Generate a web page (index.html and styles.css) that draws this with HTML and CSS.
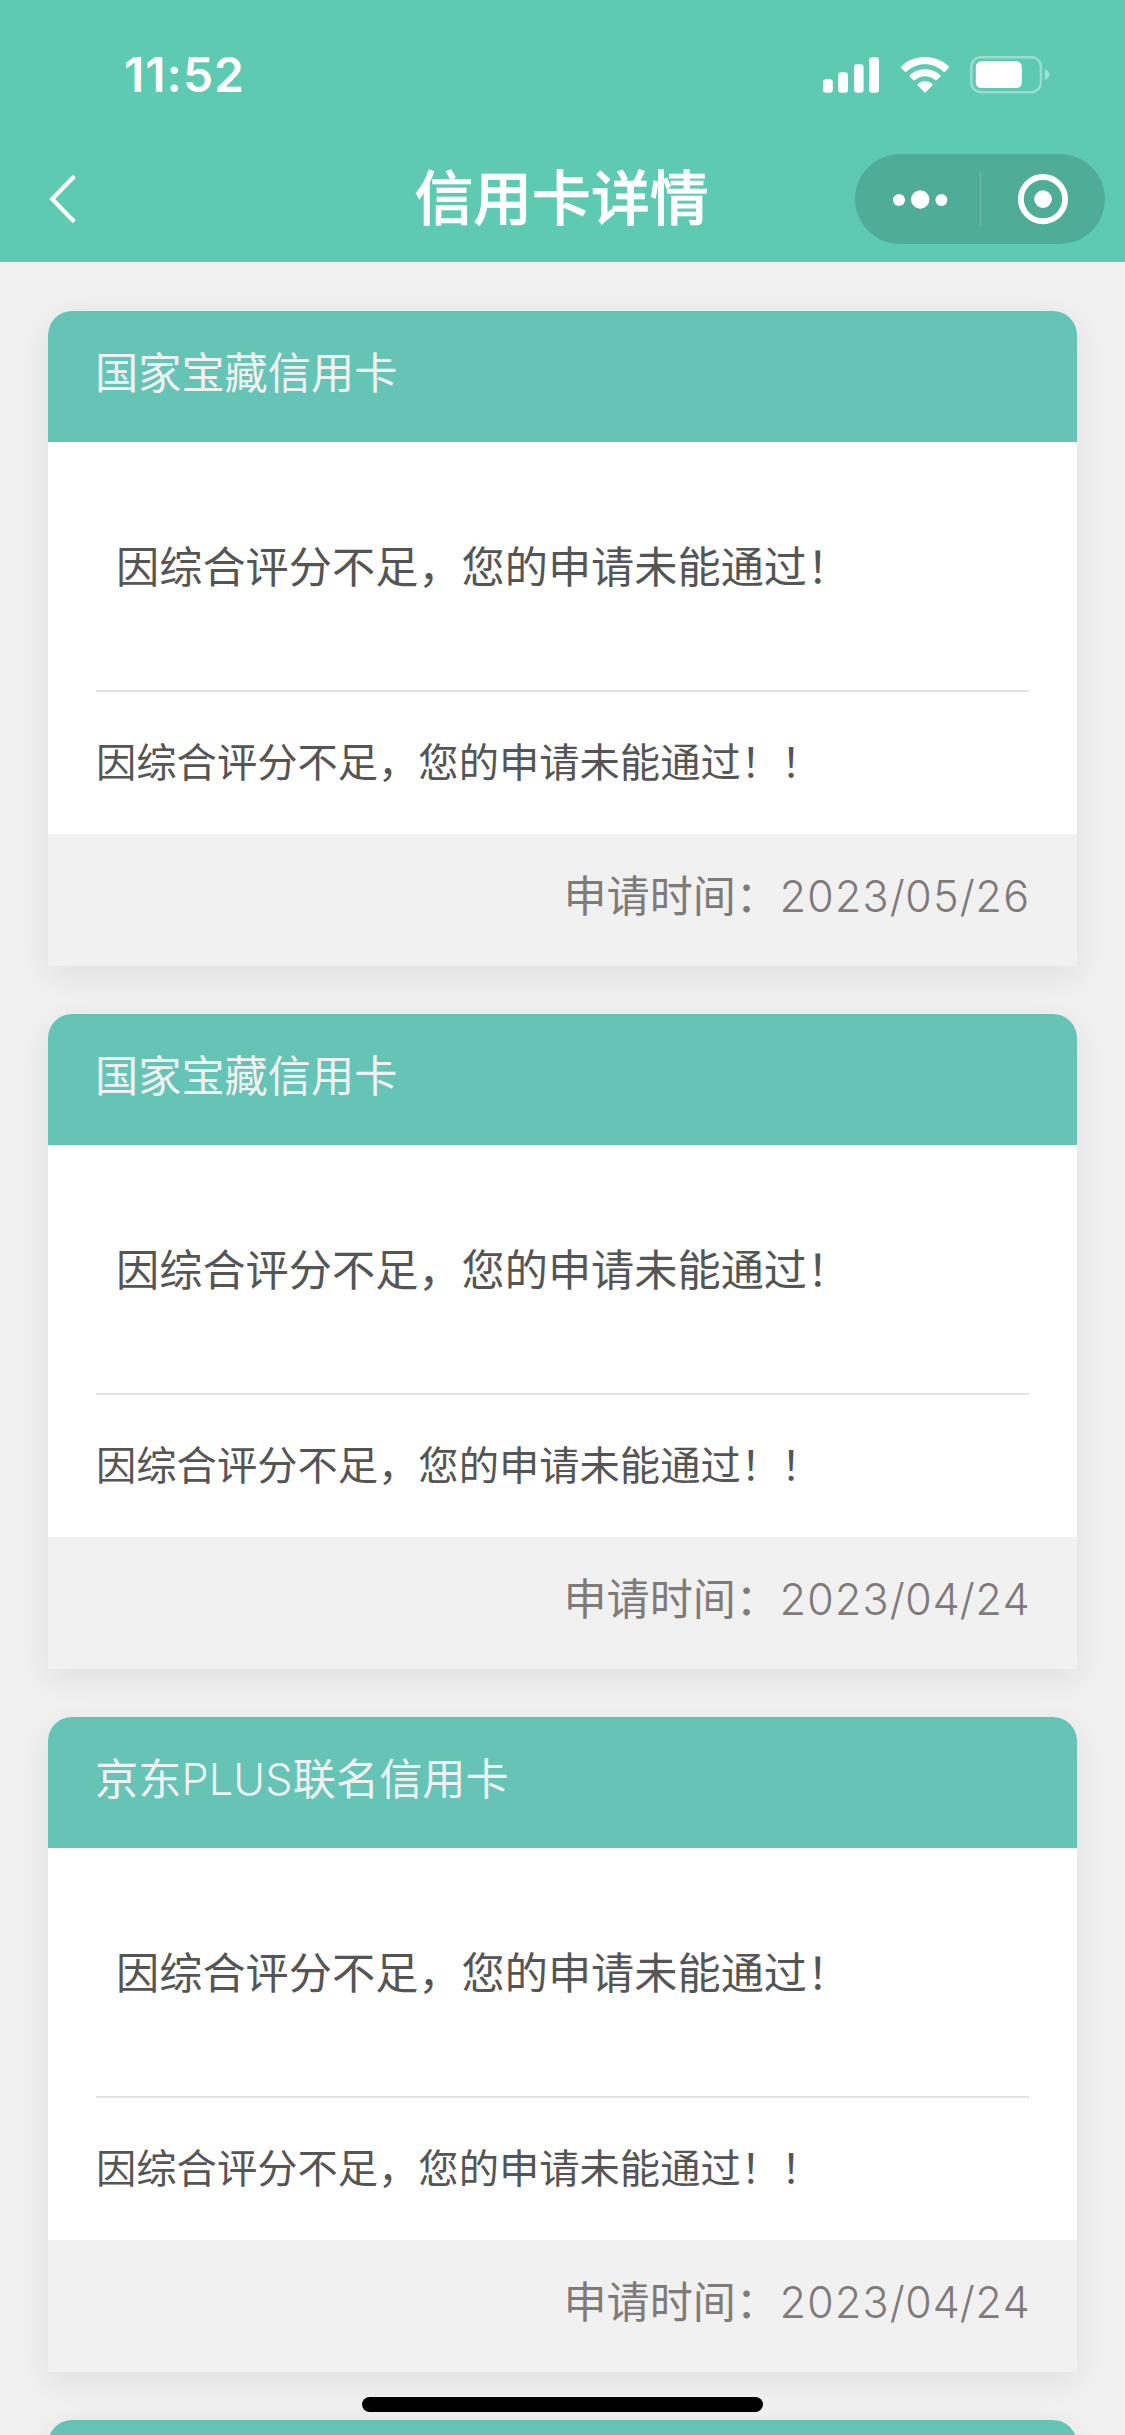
FILE: index.html
```html
<!DOCTYPE html>
<html lang="zh-CN">
<head>
<meta charset="utf-8">
<title>信用卡详情</title>
<link rel="stylesheet" href="styles.css">
</head>
<body>
<div class="screen">
  <header class="top">
    <div class="status">
      <span class="time">11:52</span>
      <div class="status-icons">
        <svg class="signal" width="56" height="36" viewBox="0 0 56 36" fill="#fff">
          <rect x="0" y="22.3" width="9.8" height="13.4" rx="3"/>
          <rect x="15.2" y="15.3" width="9.8" height="20.4" rx="3"/>
          <rect x="31" y="7.3" width="9.6" height="28.4" rx="3"/>
          <rect x="46.2" y="0.2" width="9.8" height="35.5" rx="3"/>
        </svg>
        <svg class="wifi" width="48" height="36" viewBox="0 0 48 36" fill="#fff">
          <path d="M24 0C33.500 0 42 3.500 47.500 9.200Q48.300 10.200 47.500 11.200L44.200 14.500Q43.200 15.300 42.200 14.400C37.500 9.900 31 7.200 24 7.200S10.500 9.900 5.800 14.400Q4.800 15.300 3.800 14.500L.5 11.200Q-.3 10.200.5 9.200C6 3.500 14.500 0 24 0Z"/>
          <path d="M24 12.200C30 12.200 35.500 14.500 39.300 18.200Q39.900 19 39.200 19.800L35.800 23.100Q34.900 23.900 33.900 23C31.300 20.600 27.800 19.200 24 19.200S16.700 20.600 14.100 23Q13.100 23.900 12.200 23.100L8.800 19.800Q8.100 19 8.700 18.200C12.500 14.500 18 12.200 24 12.200Z"/>
          <path d="M24 24.200C27 24.200 29.500 25.300 31.300 26.900Q31.900 27.700 31.200 28.400L24.900 35.100Q24 36 23.100 35.100L16.800 28.400Q16.100 27.700 16.700 26.900C18.500 25.300 21 24.200 24 24.200Z"/>
        </svg>
        <svg class="battery" width="80" height="38" viewBox="0 0 80 38">
          <rect x="1.300" y="1.200" width="69.600" height="34.900" rx="9.500" fill="none" stroke="#fff" stroke-opacity=".38" stroke-width="2.400"/>
          <rect x="5.800" y="5.300" width="46" height="26.800" rx="5.500" fill="#fff"/>
          <path d="M74.800 12.800Q79.300 15 79.300 18.500T74.800 24.200Z" fill="#fff" fill-opacity=".42"/>
        </svg>
      </div>
    </div>
    <nav class="nav">
      <svg class="back" width="30" height="52" viewBox="0 0 30 52" fill="none" stroke="#fff" stroke-width="4.200">
        <path d="M25.300 3.300 3.200 26l22.100 22.700"/>
      </svg>
      <h1 class="nav-title">信用卡详情</h1>
      <div class="capsule">
        <svg width="250" height="90" viewBox="0 0 250 90" fill="#fff">
          <circle cx="44" cy="46" r="6"/>
          <circle cx="65.200" cy="45.500" r="9.200"/>
          <circle cx="86.400" cy="46" r="6"/>
          <rect x="125" y="18" width="1.200" height="54" opacity=".2"/>
          <circle cx="188" cy="45.100" r="22.100" fill="none" stroke="#fff" stroke-width="5.900"/>
          <circle cx="188" cy="45.100" r="8.800"/>
        </svg>
      </div>
    </nav>
  </header>

  <main class="list">
    <section class="card">
      <h2 class="card-title">国家宝藏信用卡</h2>
      <div class="card-body">
        <p class="result">因综合评分不足，您的申请未能通过！</p>
        <p class="reason">因综合评分不足，您的申请未能通过！！</p>
      </div>
      <footer class="card-foot"><span>申请时间：</span><span class="date">2023/05/26</span></footer>
    </section>
    <section class="card">
      <h2 class="card-title">国家宝藏信用卡</h2>
      <div class="card-body">
        <p class="result">因综合评分不足，您的申请未能通过！</p>
        <p class="reason">因综合评分不足，您的申请未能通过！！</p>
      </div>
      <footer class="card-foot"><span>申请时间：</span><span class="date">2023/04/24</span></footer>
    </section>
    <section class="card">
      <h2 class="card-title">京东<span class="latin">PLUS</span>联名信用卡</h2>
      <div class="card-body">
        <p class="result">因综合评分不足，您的申请未能通过！</p>
        <p class="reason">因综合评分不足，您的申请未能通过！！</p>
      </div>
      <footer class="card-foot"><span>申请时间：</span><span class="date">2023/04/24</span></footer>
    </section>
    <section class="card">
      <h2 class="card-title"></h2>
    </section>
  </main>
  <div class="home-indicator"></div>
</div>
</body>
</html>
```
FILE: styles.css
```css
* { box-sizing: border-box; margin: 0; padding: 0; }

body {
  background: #f0f0f0;
  font-family: Inter, "Noto Sans CJK SC", sans-serif;
  font-weight: 400;
}

svg { display: block; }

.screen {
  position: relative;
  width: 1125px;
  height: 2435px;
  overflow: hidden;
}

.top {
  height: 262px;
  background: #5ecab2;
  color: #fff;
}

.status {
  display: flex;
  justify-content: space-between;
  height: 136px;
  padding: 45px 75px 0 124px;
}

.time {
  font-size: 48px;
  font-weight: 600;
  letter-spacing: 1px;
  line-height: 60px;
}

.status-icons {
  display: flex;
  padding-top: 11px;
}

.signal { margin-top: 1px; }
.wifi { margin: 1px 0 0 21.500px; }
.battery { margin-left: 21.500px; }

.nav {
  display: grid;
  grid-template-columns: 300px 1fr 300px;
  align-items: center;
  height: 126px;
  padding: 0 21px 0 19px;
}

.back { margin-left: 30px; }

.nav-title {
  font-size: 58.8px;
  font-weight: 500;
  -webkit-text-stroke: .7px #fff;
  line-height: 80px;
  text-align: center;
  white-space: nowrap;
}

.capsule {
  justify-self: end;
  width: 250px;
  height: 90px;
  margin-right: -1px;
  border-radius: 45px;
  background: #4fac96;
}

.list {
  display: flex;
  flex-direction: column;
  gap: 48px;
  padding: 49px 48px 0;
}

.card {
  flex: none;
  height: 655px;
  background: #fff;
  border-radius: 24px 24px 0 0;
  box-shadow: 0 9px 30px rgba(0, 0, 0, .065);
}

.card-title {
  height: 131px;
  padding: 0 47px;
  border-radius: 24px 24px 0 0;
  background: #65c4b6;
  color: #f1f1f1;
  font-size: 43.2px;
  font-weight: 400;
  line-height: 124px;
}

.latin {
  font-weight: 350;
  letter-spacing: .2px;
}

.card-body {
  height: 392px;
  padding: 0 48px;
  color: #555;
}

.result {
  height: 250px;
  padding-left: 20px;
  border-bottom: 2px solid #e2e2e2;
  font-size: 43.2px;
  line-height: 250px;
}

.reason {
  font-size: 40.3px;
  line-height: 142px;
}

.card-foot {
  display: flex;
  justify-content: flex-end;
  height: 132px;
  padding-right: 47px;
  background: #f1f1f1;
  color: #7f7b7b;
  font-size: 43.1px;
  line-height: 124px;
}

.date {
  font-weight: 350;
  font-variant-numeric: tabular-nums;
  letter-spacing: -.2px;
}

.home-indicator {
  position: absolute;
  left: 362px;
  top: 2397px;
  width: 401px;
  height: 15px;
  border-radius: 8px;
  background: #000;
}
```
